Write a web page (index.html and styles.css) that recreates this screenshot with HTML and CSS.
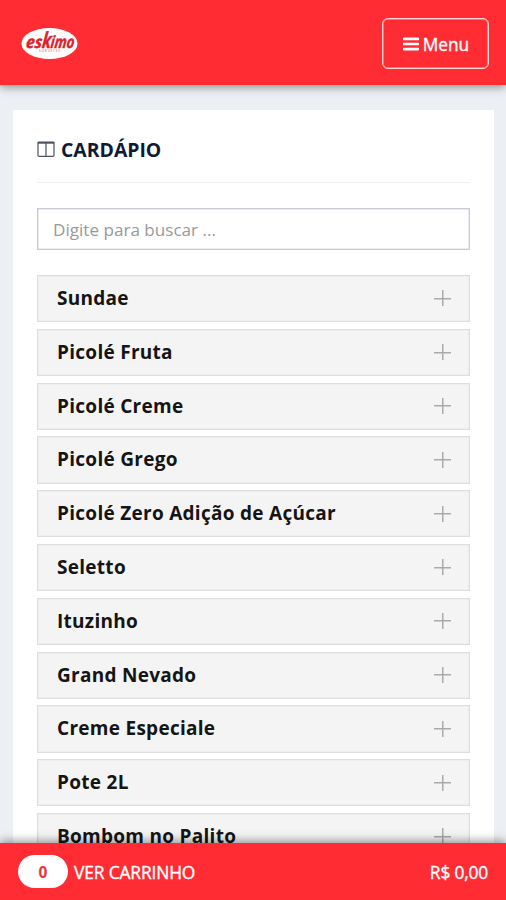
FILE: index.html
```html
<!DOCTYPE html>
<html lang="pt-BR">
<head>
<meta charset="utf-8">
<meta name="viewport" content="width=device-width, initial-scale=1">
<title>Cardápio</title>
<link rel="stylesheet" href="styles.css">
</head>
<body>
<header class="topbar">
  <svg class="logo" viewBox="0 0 58 34" role="img" aria-label="eskimo sorvetes">
    <ellipse cx="29.5" cy="16.5" rx="28" ry="15.5" fill="#fff"/>
    <g class="logo-text" transform="translate(5.5 20.8) skewX(-7)">
      <text x="0" y="0" font-size="17" textLength="16" lengthAdjust="spacingAndGlyphs">es</text>
      <text x="16" y="0" font-size="22" textLength="9" lengthAdjust="spacingAndGlyphs">k</text>
      <text x="24.5" y="0" font-size="17" textLength="24" lengthAdjust="spacingAndGlyphs">imo</text>
    </g>
    <text class="logo-sub" x="19" y="25.4" textLength="21">SORVETES</text>
  </svg>
  <button class="menu" type="button">
    <svg class="bars" viewBox="0 0 16 14"><path d="M1 1.9h14M1 7h14M1 12.1h14"/></svg>
    <span>Menu</span>
  </button>
</header>
<main class="card">
  <h1 class="title">
    <svg class="board" viewBox="0 0 18 17"><path d="M1 1.6h16" stroke-width="2.2"/><path d="M1 1v13.2q0 1.2 1.2 1.2h13.6q1.2 0 1.2-1.2V1M9 1v14.4"/></svg>
    <span>CARDÁPIO</span>
  </h1>
  <input class="search" type="text" placeholder="Digite para buscar ...">
  <ul class="list">
    <li class="item"><span>Sundae</span><i class="plus"></i></li>
    <li class="item"><span>Picolé Fruta</span><i class="plus"></i></li>
    <li class="item"><span>Picolé Creme</span><i class="plus"></i></li>
    <li class="item"><span>Picolé Grego</span><i class="plus"></i></li>
    <li class="item"><span>Picolé Zero Adição de Açúcar</span><i class="plus"></i></li>
    <li class="item"><span>Seletto</span><i class="plus"></i></li>
    <li class="item"><span>Ituzinho</span><i class="plus"></i></li>
    <li class="item"><span>Grand Nevado</span><i class="plus"></i></li>
    <li class="item"><span>Creme Especiale</span><i class="plus"></i></li>
    <li class="item"><span>Pote 2L</span><i class="plus"></i></li>
    <li class="item"><span>Bombom no Palito</span><i class="plus"></i></li>
  </ul>
</main>
<footer class="cart">
  <span class="count">0</span>
  <span class="cart-label">VER CARRINHO</span>
  <span class="total">R$ 0,00</span>
</footer>
</body>
</html>
```
FILE: styles.css
```css
* { box-sizing: border-box; }
body {
  margin: 0;
  height: 900px;
  overflow: hidden;
  display: flex;
  flex-direction: column;
  background: #ecf0f4;
  font-family: "Open Sans", sans-serif;
}
.topbar {
  flex: none;
  height: 85px;
  display: flex;
  align-items: center;
  justify-content: space-between;
  padding: 2px 17px 0 20px;
  background: #ff2d33;
  box-shadow: 0 2px 9px rgba(0, 0, 0, .42);
}
.logo { width: 58px; height: 34px; }
.logo-text {
  font-family: "Open Sans", sans-serif;
  font-weight: 700;
  font-style: italic;
  fill: #e0202a;
  stroke: #e0202a;
  stroke-width: .4;
}
.logo-sub { font-size: 3.2px; font-weight: 600; fill: #f0787d; }
.menu {
  width: 107px;
  height: 51px;
  display: flex;
  align-items: center;
  justify-content: center;
  gap: 4px;
  padding: 1px 0 0 1px;
  border: 1px solid #ffd5d6;
  box-shadow: inset 0 0 0 .5px #ffb9bc;
  border-radius: 6px;
  background: none;
  color: #fff;
  font: 400 17.3px "Open Sans", sans-serif;
  -webkit-text-stroke: .35px #fff;
}
.bars { width: 16px; height: 14px; fill: none; stroke: #fff; stroke-width: 2.7; stroke-linecap: round; }
.card {
  flex: 1;
  min-height: 0;
  overflow: hidden;
  margin: 25px 12px 0 13px;
  padding: 0 24px;
  background: #fff;
}
.title {
  display: flex;
  align-items: center;
  gap: 6px;
  height: 73px;
  margin: 0 0 25px;
  padding-top: 7px;
  border-bottom: 1px solid #eef0f2;
  color: #0f1a35;
  font-size: 19.4px;
  font-weight: 700;
}
.board { width: 18px; height: 17px; fill: none; stroke: #4b5260; stroke-width: 1.2; }
.search {
  display: block;
  width: 100%;
  height: 42px;
  margin: 0 0 25px;
  padding: 1px 15px 0;
  border: 1px solid #c9cbd8;
  box-shadow: inset 0 0 0 .5px #d8d9e2;
  border-radius: 0;
  background: #fff;
  font: 400 17.1px "Open Sans", sans-serif;
}
.search::placeholder { color: #999; opacity: 1; }
.list { display: flex; flex-direction: column; gap: 6.5px; margin: 0; padding: 0; list-style: none; }
.item {
  flex: none;
  height: 47.3px;
  display: flex;
  align-items: center;
  justify-content: space-between;
  padding: 0 18px 1.4px 19px;
  border: 1px solid #dedede;
  box-shadow: inset 0 0 0 .5px #e8e8e8;
  background: #f4f4f4;
  color: #151515;
  font-size: 19px;
  letter-spacing: .28px;
  font-weight: 700;
}
.plus {
  width: 17px;
  height: 16px;
  margin-top: 1px;
  background:
    linear-gradient(#aaa, #aaa) center / 17px 1.5px no-repeat,
    linear-gradient(#aaa, #aaa) center / 1.5px 16px no-repeat;
}
.cart {
  flex: none;
  position: relative;
  height: 57px;
  display: flex;
  align-items: center;
  padding: 0 18px;
  background: #ff2d33;
  box-shadow: 0 -2px 9px rgba(0, 0, 0, .42);
  color: #fff;
  font-size: 17.4px;
  -webkit-text-stroke: .35px #fff;
}
.cart-label { letter-spacing: -.15px; }
.count {
  width: 50px;
  height: 33px;
  margin-right: 6px;
  border-radius: 17px;
  background: #fff;
  color: #e5343b;
  font-size: 15.5px;
  font-weight: 700;
  line-height: 34px;
  text-align: center;
  -webkit-text-stroke: 0;
}
.total { margin-left: auto; letter-spacing: -.2px; }
```
